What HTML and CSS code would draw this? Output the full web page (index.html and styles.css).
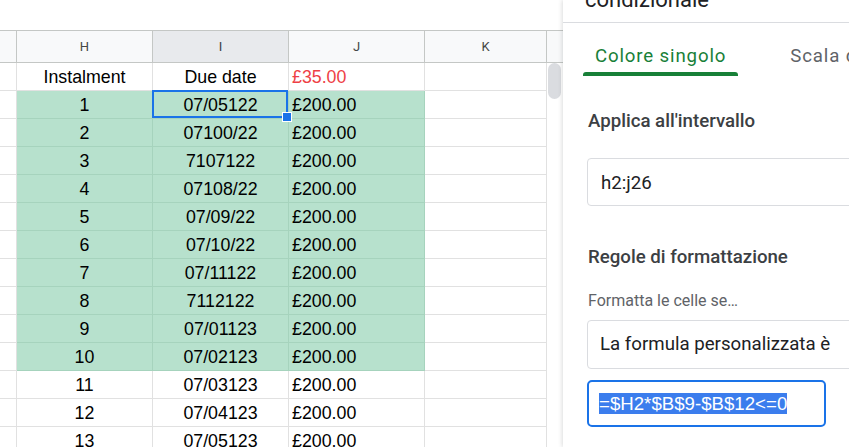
FILE: index.html
```html
<!DOCTYPE html>
<html lang="it">
<head>
<meta charset="utf-8">
<title>Formattazione condizionale</title>
<link rel="stylesheet" href="styles.css">
</head>
<body>
<div class="app">
  <div class="sheet">
    <div class="sheet-top"></div>
    <div class="grid-wrap">
      <div class="cells">
        <div class="c hdr"></div>
        <div class="c hdr">H</div>
        <div class="c hdr active">I</div>
        <div class="c hdr">J</div>
        <div class="c hdr">K</div>

        <div class="c rh"></div><div class="c ctr">Instalment</div><div class="c ctr">Due date</div><div class="c lft red">£35.00</div><div class="c"></div>

        <div class="c rh"></div><div class="c ctr g">1</div><div class="c ctr g sel">07/05122<span class="handle"></span></div><div class="c lft g">£200.00</div><div class="c"></div>
        <div class="c rh"></div><div class="c ctr g">2</div><div class="c ctr g">07100/22</div><div class="c lft g">£200.00</div><div class="c"></div>
        <div class="c rh"></div><div class="c ctr g">3</div><div class="c ctr g">7107122</div><div class="c lft g">£200.00</div><div class="c"></div>
        <div class="c rh"></div><div class="c ctr g">4</div><div class="c ctr g">07108/22</div><div class="c lft g">£200.00</div><div class="c"></div>
        <div class="c rh"></div><div class="c ctr g">5</div><div class="c ctr g">07/09/22</div><div class="c lft g">£200.00</div><div class="c"></div>
        <div class="c rh"></div><div class="c ctr g">6</div><div class="c ctr g">07/10/22</div><div class="c lft g">£200.00</div><div class="c"></div>
        <div class="c rh"></div><div class="c ctr g">7</div><div class="c ctr g">07/11122</div><div class="c lft g">£200.00</div><div class="c"></div>
        <div class="c rh"></div><div class="c ctr g">8</div><div class="c ctr g">7112122</div><div class="c lft g">£200.00</div><div class="c"></div>
        <div class="c rh"></div><div class="c ctr g">9</div><div class="c ctr g">07/01123</div><div class="c lft g">£200.00</div><div class="c"></div>
        <div class="c rh"></div><div class="c ctr g">10</div><div class="c ctr g">07/02123</div><div class="c lft g">£200.00</div><div class="c"></div>

        <div class="c rh"></div><div class="c ctr">11</div><div class="c ctr">07/03123</div><div class="c lft">£200.00</div><div class="c"></div>
        <div class="c rh"></div><div class="c ctr">12</div><div class="c ctr">07/04123</div><div class="c lft">£200.00</div><div class="c"></div>
        <div class="c rh"></div><div class="c ctr">13</div><div class="c ctr">07/05123</div><div class="c lft">£200.00</div><div class="c"></div>
      </div>
      <div class="vscroll">
        <div class="vs-head"></div>
        <div class="thumb"></div>
      </div>
    </div>
  </div>

  <aside class="panel">
    <div class="panel-head">
      <div class="title">condizionale</div>
    </div>
    <div class="tabs">
      <div class="tab on"><span class="tab-label">Colore singolo</span></div>
      <div class="tab"><span class="tab-label">Scala di colori</span></div>
    </div>
    <div class="section-title">Applica all'intervallo</div>
    <div class="field">h2:j26</div>
    <div class="section-title rules">Regole di formattazione</div>
    <div class="hint">Formatta le celle se…</div>
    <div class="field select">La formula personalizzata è</div>
    <div class="formula"><span class="selected">=$H2*$B$9-$B$12&lt;=0</span></div>
  </aside>
</div>
</body>
</html>
```

FILE: styles.css
```css
* { box-sizing: border-box; }
html, body { margin: 0; padding: 0; }
body {
  width: 849px;
  height: 447px;
  overflow: hidden;
  background: #fff;
  font-family: Roboto, "Liberation Sans", Arial, sans-serif;
}
.app { display: flex; height: 447px; }

/* ---------- spreadsheet ---------- */
.sheet { width: 563px; flex: none; }
.sheet-top { height: 30px; }
.grid-wrap { display: flex; border-top: 1px solid #c4c7c5; }
.cells {
  display: grid;
  grid-template-columns: 17px 136px 136px 136px 122px;
  grid-template-rows: 32px;
  grid-auto-rows: 28px;
}
.c {
  position: relative;
  border-right: 1px solid #e1e1e1;
  border-bottom: 1px solid #e1e1e1;
  padding-top: 1px;
  font-family: "Liberation Sans", Arial, sans-serif;
  font-size: 17.8px;
  line-height: 26px;
  color: #000;
  white-space: nowrap;
}
.hdr {
  padding-top: 0;
  background: #f8f9fa;
  border-right-color: #c4c7c5;
  border-bottom-color: #c4c7c5;
  font-family: Roboto, "Liberation Sans", sans-serif;
  font-size: 13px;
  line-height: 31px;
  color: #444746;
  text-align: center;
}
.hdr.active { background: #e8eaed; color: #3c4043; }
.ctr { text-align: center; }
.lft { padding-left: 3px; }
.red { color: #ee3f46; }
.g { background: #b7e1cd; border-color: #a6d3bd; }
.sel::after {
  content: "";
  position: absolute;
  left: -1px; top: -1px; right: 0; bottom: 0;
  border: 2px solid #1a73e8;
  pointer-events: none;
}
.handle {
  position: absolute;
  right: -4px; bottom: -4px;
  width: 10px; height: 10px;
  background: #1a73e8;
  border: 1px solid #fff;
  z-index: 2;
}
.vscroll { width: 16px; }
.vs-head {
  height: 32px;
  background: #f8f9fa;
  border-bottom: 1px solid #c4c7c5;
}
.thumb {
  width: 13px;
  height: 36px;
  margin: 0 0 0 1px;
  border-radius: 7px;
  background: #dadce0;
}

/* ---------- side panel ---------- */
.panel {
  flex: 1;
  min-width: 0;
  overflow: hidden;
  background: #fff;
  box-shadow: -1px 0 4px rgba(60, 64, 67, 0.18);
  position: relative;
  z-index: 1;
}
.panel-head {
  height: 23px;
  border-bottom: 1px solid #dadce0;
  overflow: hidden;
  padding-left: 22px;
}
.title {
  font-size: 22px;
  line-height: 22px;
  color: #202124;
  margin-top: -11.5px;
  white-space: nowrap;
}
.tabs {
  display: flex;
  gap: 40px;
  padding-left: 20px;
  white-space: nowrap;
}
.tab {
  display: flex;
  flex-direction: column;
  padding-top: 21px;
}
.tab-label {
  padding: 0 12px;
  font-size: 18.67px;
  line-height: 24px;
  letter-spacing: 0.85px;
  color: #5f6368;
}
.tab::after {
  content: "";
  display: block;
  height: 4px;
  margin-top: 4px;
  border-radius: 3px 3px 0 0;
}
.tab.on .tab-label { color: #188038; }
.tab.on::after { background: #188038; }

.section-title {
  margin-top: 33px;
  padding-left: 25px;
  font-size: 18.67px;
  font-weight: 500;
  line-height: 24px;
  color: #3c4043;
  white-space: nowrap;
}
.section-title.rules { margin-top: 39px; }
.field {
  margin: 25px 0 0 24px;
  width: 320px;
  height: 48px;
  border: 1px solid #dadce0;
  border-radius: 4px;
  padding-left: 13px;
  padding-top: 1px;
  font-size: 18.67px;
  line-height: 46px;
  color: #202124;
  white-space: nowrap;
}
.hint {
  margin-top: 22px;
  padding-left: 25px;
  font-size: 16px;
  line-height: 20px;
  color: #5f6368;
}
.field.select {
  margin-top: 9px;
  height: 49px;
  padding-left: 12px;
  padding-top: 0;
}
.formula {
  margin: 11px 0 0 24px;
  width: 239px;
  height: 47px;
  border: 2px solid #1a73e8;
  border-radius: 5px;
  padding-left: 10px;
  font-family: "Liberation Sans", Arial, sans-serif;
  font-size: 18.67px;
  line-height: 43px;
  white-space: nowrap;
}
.selected { background: #3b7ded; color: #fff; }
```
